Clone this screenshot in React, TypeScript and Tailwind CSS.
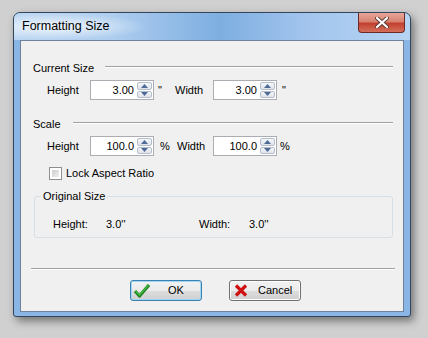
import React from 'react';

const font = { fontFamily: '"Liberation Sans", Arial, sans-serif' };

const Spin = ({ value }: { value: string }) => (
  <div className="flex h-[20px] w-[64px] border border-[#abadb3] bg-white">
    <div className="flex-1 pr-[3px] text-right text-[11px] leading-[18px] text-black">{value}</div>
    <div className="flex w-[16px] flex-col gap-[1px] p-[1px] pl-0">
      {['up', 'down'].map((d) => (
        <div
          key={d}
          className="flex flex-1 items-center justify-center rounded-[2px] border border-[#b5bfcb] bg-[linear-gradient(#f4f6f9,#dfe4ea)]"
        >
          <svg width="7" height="4" viewBox="0 0 7 4">
            {d === 'up' ? <path d="M0 4 L3.5 0 L7 4 Z" fill="#4e6a96" /> : <path d="M0 0 L3.5 4 L7 0 Z" fill="#4e6a96" />}
          </svg>
        </div>
      ))}
    </div>
  </div>
);

const Header = ({ title, lineStart }: { title: string; lineStart: string }) => (
  <div className="flex h-[14px] text-[11px] leading-[14px] text-black">
    <span className={lineStart}>{title}</span>
    <div className="mt-[5px] h-[2px] flex-1 border-t border-b border-t-[#a0a0a0] border-b-white" />
  </div>
);

const App = () => {
  return (
    <div className="min-h-[338px] w-[428px] bg-[#d0d0d0] pl-[13px] pt-[12px]" style={font}>
      <div className="flex h-[305px] w-[398px] flex-col rounded-t-[7px] rounded-b-[3px] border border-[#34465c] bg-[#8ab6e6] shadow-[3px_4px_9px_rgba(0,0,0,0.45)]">
        {/* title bar */}
        <div className="flex h-[27px] rounded-t-[6px] bg-[linear-gradient(90deg,#bcd6f2_0%,#aecdef_25%,#7eaee1_52%,#a4c6ee_75%,#b6d3f2_100%)]">
          <div className="flex items-center rounded-tl-[6px] bg-[radial-gradient(ellipse_at_30%_50%,rgba(255,255,255,0.8),rgba(255,255,255,0)_70%)] pl-[8px] pr-[40px] text-[12.5px] text-black">
            Formatting Size
          </div>
          <div className="flex-1" />
          <div className="mr-[5px] flex h-[20px] w-[47px] items-center justify-center rounded-b-[4px] border border-t-0 border-[#6b2a25] bg-[linear-gradient(#e8a799_0%,#d88271_45%,#c2402f_55%,#d4705c_100%)]">
            <svg width="14" height="11" viewBox="0 0 14 11">
              <path d="M2 1 L12 10 M12 1 L2 10" stroke="#5a3a36" strokeWidth="4" strokeLinecap="round" />
              <path d="M2 1 L12 10 M12 1 L2 10" stroke="#ffffff" strokeWidth="2.2" strokeLinecap="round" />
            </svg>
          </div>
        </div>

        {/* client area */}
        <div className="mx-[6px] flex h-[272px] flex-col border border-[#6f8299] bg-[#f0f0f0] pl-[12px] pr-[10px]">
          <div className="mt-[20px]">
            <Header title="Current Size" lineStart="mr-[11px]" />
          </div>
          <div className="mt-[5px] flex h-[20px] items-center text-[11px] text-black">
            <span className="w-[57px] pl-[14px]">Height</span>
            <Spin value="3.00" />
            <span className="w-[21px] pl-[4px]">"</span>
            <span className="w-[38px]">Width</span>
            <Spin value="3.00" />
            <span className="pl-[5px]">"</span>
          </div>

          <div className="mt-[17px]">
            <Header title="Scale" lineStart="mr-[12px]" />
          </div>
          <div className="mt-[5px] flex h-[20px] items-center text-[11px] text-black">
            <span className="w-[57px] pl-[14px]">Height</span>
            <Spin value="100.0" />
            <span className="w-[23px] pl-[6px]">%</span>
            <span className="w-[36px]">Width</span>
            <Spin value="100.0" />
            <span className="pl-[3px]">%</span>
          </div>

          <div className="mt-[11px] flex h-[13px] items-center pl-[16px] text-[11px] text-black">
            <div className="h-[13px] w-[13px] border border-[#8f8f8f] bg-white p-[2px]">
              <div className="h-full w-full bg-[linear-gradient(135deg,#cdcdcd,#f0f0f0)]" />
            </div>
            <span className="pl-[4px]">Lock Aspect Ratio</span>
          </div>

          <fieldset className="ml-[1px] mr-0 mt-[10px] rounded-[3px] border border-[#d5dfe5] pb-[6px]">
            <legend className="ml-[6px] px-[2px] text-[11px] leading-[13px] text-black">Original Size</legend>
            <div className="mt-[14px] flex h-[14px] items-center text-[11px] text-black">
              <span className="w-[71px] pl-[18px]">Height:</span>
              <span className="w-[93px]">3.0''</span>
              <span className="w-[50px]">Width:</span>
              <span>3.0''</span>
            </div>
          </fieldset>

          <div className="-ml-[2px] -mr-[2px] mt-[30px] h-[2px] border-t border-b border-t-[#a0a0a0] border-b-white" />

          <div className="mt-[10px] flex text-[11px] text-black">
            <div className="ml-[97px] flex h-[21px] w-[72px] items-center rounded-[3px] border border-[#3c7fb1] bg-[linear-gradient(#f2f2f2_0%,#ebebeb_50%,#dddddd_51%,#cfcfcf_100%)] shadow-[inset_0_0_0_1px_#9fd8f5]">
              <svg className="ml-[3px]" width="16" height="14" viewBox="0 0 16 14">
                <path d="M1 7 L5.5 12 L15 1" fill="none" stroke="#1b7a1b" strokeWidth="3.2" strokeLinejoin="round" />
                <path d="M1.5 7 L5.5 11.2 L14.5 1.2" fill="none" stroke="#3fbf3f" strokeWidth="1.4" />
              </svg>
              <span className="ml-[18px]">OK</span>
            </div>
            <div className="ml-[27px] flex h-[21px] w-[72px] items-center rounded-[3px] border border-[#707070] bg-[linear-gradient(#f2f2f2_0%,#ebebeb_50%,#dddddd_51%,#cfcfcf_100%)] shadow-[inset_0_0_0_1px_#fcfcfc]">
              <svg className="ml-[4px]" width="14" height="13" viewBox="0 0 14 13">
                <path d="M2 1.5 L12 11.5 M12 1.5 L2 11.5" stroke="#d01010" strokeWidth="3.2" />
              </svg>
              <span className="ml-[10px]">Cancel</span>
            </div>
          </div>
        </div>
      </div>
    </div>
  );
};

export default App;
